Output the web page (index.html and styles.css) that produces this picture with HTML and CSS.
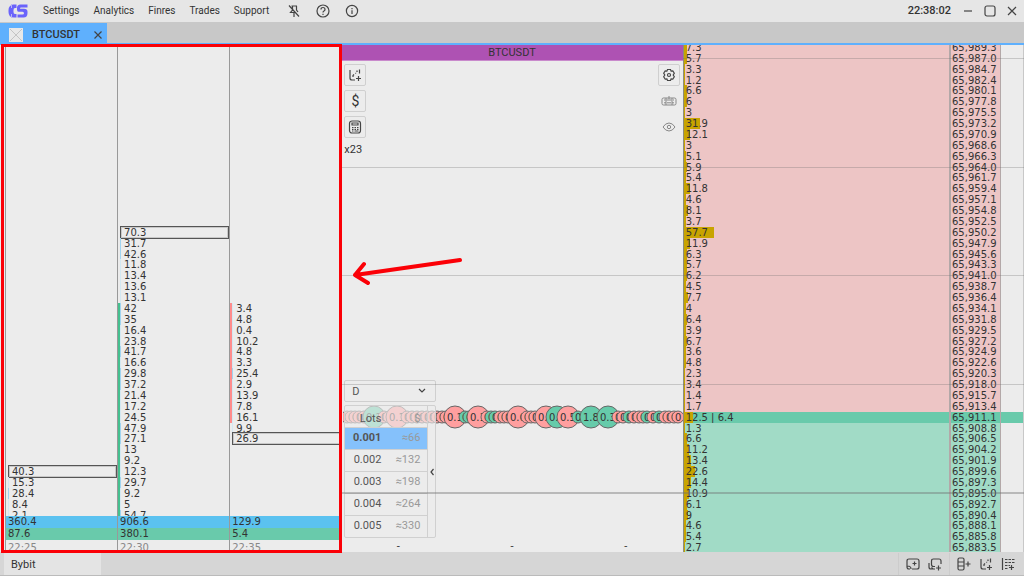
FILE: index.html
```html
<!DOCTYPE html>
<html lang="en">
<head>
<meta charset="utf-8">
<title>BTCUSDT</title>
<link rel="stylesheet" href="styles.css">
</head>
<body>
<div class="app">
  <header class="topbar">
    <svg class="logo" viewBox="0 0 20 16" width="20" height="16" aria-label="Logo">
      <path class="logo-fill" d="M5 1.500H8.500V5H7Q5.500 5 5.500 7v2q0 2 1.500 2h1.500v3.500H6Q0.500 14.500 0.500 9V7Q0.500 2.500 5 1.500zM12.500 1.500h7v3h-6.500q-1 0-1 1.200H16q3.500 0 3.500 3v1.300q0 4.500-4 4.500H9.500V11.500H14.500q1.500 0 1.500-1.300T14.500 8.700H10.500Q9 8.700 9 6.500V5q0-3.500 3.500-3.500z"/>
      <path class="logo-cut" d="M3.500 1v4M3.500 11v4"/>
    </svg>
    <nav class="menu">
      <button>Settings</button>
      <button>Analytics</button>
      <button>Finres</button>
      <button>Trades</button>
      <button>Support</button>
    </nav>
    <div class="top-icons">
      <button aria-label="Unpin">
        <svg class="icon" viewBox="0 0 14 14" width="14" height="14"><path d="M4.500 2h5.500M5.500 2v4L3.500 8.500h5M9.500 2v4l1.500 2M7 8.500V13M2 1.500l10 11"/></svg>
      </button>
      <button aria-label="Help">
        <svg class="icon" viewBox="0 0 14 14" width="14" height="14"><circle cx="7" cy="7" r="6"/><path d="M5 5.500Q5 3.500 7 3.500t2 2Q9 6.500 8 7T7 8.500M7 9.800v1.200"/></svg>
      </button>
      <button aria-label="Information">
        <svg class="icon" viewBox="0 0 14 14" width="14" height="14"><circle cx="7" cy="7" r="5.600"/><path d="M7 6.200V10M7 4v1.200"/></svg>
      </button>
    </div>
    <time class="clock">22:38:02</time>
    <div class="window-buttons">
      <button aria-label="Minimize"><svg class="icon" viewBox="0 0 12 12" width="12" height="12"><path d="M2 6h8"/></svg></button>
      <button aria-label="Maximize"><svg class="icon" viewBox="0 0 12 12" width="12" height="12"><rect x="1" y="1" width="10" height="10" rx="2"/></svg></button>
      <button aria-label="Close"><svg class="icon" viewBox="0 0 12 12" width="12" height="12"><path d="M2 2l8 8M10 2l-8 8"/></svg></button>
    </div>
  </header>

  <div class="tabs">
    <div class="tab">
      <svg class="tab-thumb" viewBox="0 0 14 14" width="14" height="14"><rect x="0" y="0" width="14" height="14"/><path d="M1 1l12 12M13 1L1 13"/></svg>
      <span class="tab-name">BTCUSDT</span>
      <button aria-label="Close tab"><svg class="icon" viewBox="0 0 10 10" width="10" height="10"><path d="M1.500 1.500l7 7M8.500 1.500l-7 7"/></svg></button>
    </div>
  </div>

  <main class="workspace">
    <section class="clusters" id="clusters" aria-label="Clusters"></section>

    <div class="market">
      <section class="chart">
        <div class="ladder ticks-layer"><div class="ticks" id="ticks"></div></div>
        <h1 class="chart-title">BTCUSDT</h1>
        <div class="chart-tools">
          <div class="tool-column">
            <button class="tool" aria-label="Add chart"><svg class="icon" viewBox="0 0 14 14" width="14" height="14"><path d="M2 2v8q0 2 2 2h3M5 9V7.500L6 6.500M7.500 5l.5.5M9 4V2.500M11.500 1.500v4M10.500 8v5M8 10.500h5"/></svg></button>
            <button class="tool tool-dollar" aria-label="Currency">$</button>
            <button class="tool" aria-label="Calculator"><svg class="icon" viewBox="0 0 14 14" width="14" height="14"><rect x="1.500" y="1" width="11" height="12" rx="2.500"/><path d="M4 3h6v2H4zM4 7.500h1.500M6.500 7.500H8M9 7.500h1.500M4 9.300h1.500M6.500 9.300H8M9 9.300h1.500M4 11h1.500M6.500 11h4"/></svg></button>
            <span class="multiplier">x23</span>
          </div>
          <div class="tool-column">
            <button class="tool" aria-label="Chart settings"><svg class="icon" viewBox="0 0 14 14" width="14" height="14"><path d="M5.500 1.500h3l.6 1.600 1.700-.3 1.500 2.500L11.200 7l1.100 1.700-1.500 2.500-1.700-.3-.6 1.600h-3l-.6-1.600-1.700.3-1.500-2.500L2.800 7 1.700 5.300l1.500-2.500 1.700.3z"/><circle cx="7" cy="7" r="1.500"/></svg></button>
            <button class="tool tool-plain" aria-label="Keyboard"><svg class="icon" viewBox="0 0 16 12" width="16" height="12"><rect x="1" y="3" width="14" height="7" rx="1.500"/><path d="M3 5h1.500M5.500 5H7M9 5h1.500M12 5h1M3 7.800h2M6 7.800h4M11 7.800h2M5 3v7M8 1v5M11 3v7"/></svg></button>
            <button class="tool tool-plain" aria-label="Visibility"><svg class="icon" viewBox="0 0 14 12" width="14" height="12"><path d="M1 6q2.500-4 6-4t6 4q-2.500 4-6 4T1 6z"/><circle cx="7" cy="6" r="1.700"/></svg></button>
          </div>
        </div>

        <div class="order-panel">
          <select class="account" aria-label="Account"><option>D</option></select>
          <div class="lots-box">
            <table class="lots">
              <thead><tr><th>Lots</th><th>$</th></tr></thead>
              <tbody>
                <tr class="selected"><td>0.001</td><td>≈66</td></tr>
                <tr><td>0.002</td><td>≈132</td></tr>
                <tr><td>0.003</td><td>≈198</td></tr>
                <tr><td>0.004</td><td>≈264</td></tr>
                <tr><td>0.005</td><td>≈330</td></tr>
              </tbody>
            </table>
            <button class="collapse" aria-label="Collapse"><svg class="icon" viewBox="0 0 6 10" width="6" height="10"><path d="M4.500 2L2 5l2.500 3"/></svg></button>
          </div>
        </div>
        <div class="dashes"><span>-</span><span>-</span><span>-</span></div>
      </section>

      <section class="book">
        <table class="book-table">
          <tbody class="ladder" id="book"></tbody>
        </table>
      </section>
      <div class="ladder levels" id="levels"></div>
    </div>

    <div class="frame"></div>
    <svg class="arrow" viewBox="0 0 114 30" width="114" height="30"><path d="M110 5L5 20M14 9L5 20l13 8"/></svg>
  </main>

  <footer class="statusbar">
    <button class="exchange">Bybit</button>
    <div class="status-group">
      <button aria-label="Add window"><svg class="icon" viewBox="0 0 14 14" width="14" height="14"><path d="M4 12H3Q1 12 1 10V4q0-2 2-2h8q2 0 2 2v6q0 2-2 2H6M1.500 9Q5 9 5 12M8.500 4.500v4M6.500 6.500h4"/></svg></button>
      <button aria-label="Add group"><svg class="icon" viewBox="0 0 14 14" width="14" height="14"><path d="M7 9.500H5.500Q3.500 9.500 3.500 7.500V4Q3.500 2 5.500 2H11q2 0 2 2v3M1 6v4q0 2 2 2h4M5 12l-1.500-1.500M10.500 8.500v5M8 11h5"/></svg></button>
    </div>
    <div class="status-group">
      <button aria-label="Add order book"><svg class="icon" viewBox="0 0 14 14" width="14" height="14"><rect x="1" y="1" width="6" height="12" rx="1.500"/><path d="M1 5h6M1 9h6M11 4.500v5M8.500 7h5"/></svg></button>
      <button aria-label="Add chart"><svg class="icon" viewBox="0 0 14 14" width="14" height="14"><path d="M2 2v8q0 2 2 2h3M5 9V7.500L6 6.500M7.500 5l.5.5M9 4V2.500M11.500 1.500v4M10.500 8v5M8 10.500h5"/></svg></button>
      <button aria-label="Add clusters"><svg class="icon" viewBox="0 0 14 14" width="14" height="14"><path d="M1.500 1v12M4 2.500h2.500M7.500 2.500H10M11 2.500h2.500M4 5.500h2.500M7.500 5.500H10M11 5.500h2.500M4 8.500h2.500M4 11.500h2.500M7.500 8.500H9M10.500 8v5M8 10.500h5"/></svg></button>
    </div>
  </footer>
</div>
<script src="app.js"></script>
</body>
</html>
```
FILE: styles.css
```css
* { box-sizing: border-box; }

body {
  margin: 0;
  font: 11px/16px Roboto, sans-serif;
  color: #333;
}

button {
  margin: 0;
  padding: 0;
  border: 0;
  background: none;
  font: inherit;
  color: inherit;
  display: flex;
  align-items: center;
  justify-content: center;
}

.icon {
  display: block;
  fill: none;
  stroke: #444;
  stroke-width: 1.2;
}

.app {
  height: 100vh;
  display: flex;
  flex-direction: column;
  overflow: hidden;
  background: #d6d6d6;
}

/* Top bar */
.topbar {
  height: 22px;
  flex: none;
  display: flex;
  align-items: center;
  padding: 0 6px 0 8px;
  background: #e6e6e6;
}
.logo { margin-right: 15px; }
.logo-fill { fill: #6a63fb; }
.logo-cut { stroke: #b9b6f3; stroke-width: 1; fill: none; }
.menu { display: flex; gap: 14px; font-size: 10px; }
.top-icons { display: flex; gap: 15px; margin-left: 18px; }
.clock { margin-left: auto; font-weight: 500; }
.window-buttons { display: flex; gap: 10px; margin-left: 11px; }

/* Tabs */
.tabs {
  height: 23px;
  flex: none;
  display: flex;
  align-items: flex-end;
  background: #c8c8c8;
  border-bottom: 2px solid #5fb0fd;
}
.tab {
  height: 20px;
  width: 107px;
  display: flex;
  align-items: center;
  padding: 3px 4px 0 9px;
  background: #5fb0fd;
}
.tab-name { margin-left: 9px; font-weight: 500; }
.tab button { margin-left: auto; }
.tab-thumb rect { fill: #e8e8e8; }
.tab-thumb path { stroke: #c4c4c4; }

/* Workspace */
.workspace {
  flex: 1;
  min-height: 0;
  position: relative;
  display: grid;
  grid-template-columns: minmax(0, 1fr) minmax(0, 2fr);
  background: #ececec;
}

.ladder {
  position: absolute;
  top: -3px;
  bottom: -1px;
  left: 0;
  right: 0;
  display: grid;
  grid-template-rows: repeat(47, minmax(0, 1fr));
  grid-template-columns: minmax(0, 1fr);
  font: 10px/11px "DejaVu Sans", sans-serif;
}

/* Clusters */
.clusters {
  display: grid;
  grid-template-columns: repeat(3, 1fr);
  padding-left: 5px;
}
.cluster {
  position: relative;
  overflow: hidden;
  display: flex;
  flex-direction: column;
  justify-content: flex-end;
  border-left: 1px solid #999;
  font: 10px/12px "DejaVu Sans", sans-serif;
}
.cluster-row {
  position: relative;
  margin-left: 2px;
  padding-left: 3px;
  border-left: 1px solid #d3e8f2;
}
.cluster-row.strong { border-left-color: #9fd4f1; }
.cluster-row.peak::after {
  content: "";
  position: absolute;
  inset: -1px 0 -1px -1px;
  border: 1px solid #555;
  outline: 1px solid rgba(90, 90, 90, 0.25);
  outline-offset: -2px;
}
.candle { width: 2px; grid-column: 1; }
.candle.up { background: #45c08f; }
.candle.down { background: #ff8c8c; }
.totals { position: relative; }
.totals div { height: 12px; padding-left: 2px; }
.totals .volume { background: #5bc2f0; }
.totals .delta { background: #69caab; }
.totals .time { background: #ececec; color: #888; line-height: 15px; }

/* Market */
.market {
  position: relative;
  display: flex;
  overflow: hidden;
}
.chart {
  flex: 1;
  min-width: 0;
  position: relative;
  display: flex;
  flex-direction: column;
}
.chart-title {
  margin: 0;
  z-index: 2;
  text-align: center;
  background: #ae52b3;
  border-bottom: 1px solid #c98acc;
  font-size: 11px;
  line-height: 15px;
  font-weight: 400;
}
.ticks { grid-row: 35; position: relative; }
.ticks svg {
  position: absolute;
  right: 0;
  top: 50%;
  margin-top: -12px;
}
.ticks circle { stroke: #666; stroke-width: 1; }
.ticks .sell { fill: #ff9f9f; }
.ticks .buy { fill: #66cbaa; }
.ticks text { fill: #333; font: 10px "DejaVu Sans", sans-serif; }

.chart-tools {
  display: flex;
  justify-content: space-between;
  padding: 3px;
}
.tool-column { display: flex; flex-direction: column; gap: 4px; }
.tool {
  width: 22px;
  height: 22px;
  border: 1px solid #cfcfcf;
  border-radius: 2px;
}
.tool-plain { border-color: transparent; }
.tool-plain .icon { stroke: #888; stroke-width: 1; }
.tool-dollar { font-size: 14px; }

.order-panel {
  width: 92px;
  margin: auto 0 0 3px;
  position: relative;
  display: flex;
  flex-direction: column;
  gap: 3px;
}
.account {
  height: 22px;
  appearance: none;
  padding: 0 7px;
  border: 1px solid #cfcfcf;
  border-radius: 2px;
  font: 11px Roboto, sans-serif;
  color: #555;
  background: #ececec url("data:image/svg+xml,%3Csvg xmlns='http://www.w3.org/2000/svg' width='8' height='6'%3E%3Cpath d='M1 1l3 3 3-3' fill='none' stroke='%23444' stroke-width='1.2'/%3E%3C/svg%3E") no-repeat right 9px center;
}
.lots-box {
  display: flex;
  border: 1px solid #d0d0d0;
  border-radius: 2px;
  background: rgba(236, 236, 236, 0.65);
}
.lots { flex: 1; border-collapse: collapse; color: #555; }
.lots th, .lots td {
  height: 22px;
  padding: 0;
  border-bottom: 1px solid #d0d0d0;
  text-align: right;
  font-weight: 400;
}
.lots th { height: 21px; vertical-align: bottom; }
.lots tr > :first-child { width: 36px; }
.lots tr > :last-child { padding-right: 7px; color: #999; }
.lots tr:last-child td { border-bottom: 0; }
.lots .selected { background: #85c1fb; }
.lots .selected td:first-child { font-weight: 700; }
.collapse { width: 8px; border-left: 1px solid #d0d0d0; }
.dashes {
  display: grid;
  grid-template-columns: repeat(3, 1fr);
  height: 14px;
  line-height: 18px;
  text-align: center;
}

.book {
  flex: 0 0 50%;
  position: relative;
  border-left: 1px solid #8d8d7c;
  border-right: 1px solid #c8c8c8;
}
.book-table { display: block; }
.book-table tr {
  display: grid;
  grid-template-columns: minmax(0, 1fr) 52px 22px;
}
.book-table td { padding: 0; display: block; }
.book-table .size { position: relative; background: #edc5c5; }
.book-table .size .bar { position: absolute; left: 0; top: 0; bottom: 0; background: #c8a400; }
.book-table .size .value { position: relative; margin-left: 2px; }
.book-table .price {
  padding-left: 1px;
  background: #edc5c5;
  border-left: 2px solid #b3a8a8;
  border-right: 1px solid #b3a8a8;
}
.book-table .bid .size, .book-table .bid .price { background: #a1dbc6; }
.book-table .last td, .book-table .last .size, .book-table .last .price { background: #69caab; }

.levels { pointer-events: none; }
.level {
  grid-column: 1;
  align-self: center;
  height: 1px;
  background: rgba(110, 110, 110, 0.3);
}
.level.major { height: 2px; background: rgba(110, 110, 110, 0.4); }

.frame {
  position: absolute;
  left: 1px;
  top: -1px;
  bottom: -1px;
  width: 33.3%;
  border: 3px solid #fb0007;
  z-index: 3;
}
.arrow {
  position: absolute;
  left: 34.2%;
  top: 41.5%;
  z-index: 3;
  fill: none;
  stroke: #fb0007;
  stroke-width: 4;
  stroke-linecap: round;
  stroke-linejoin: round;
}

/* Status bar */
.statusbar {
  height: 24px;
  flex: none;
  display: flex;
  align-items: stretch;
  padding: 1px 2px 0 4px;
  border-bottom: 1px solid #bbb;
}
.exchange {
  width: 97px;
  justify-content: flex-start;
  padding: 2px 0 0 7px;
  margin-right: auto;
  background: #e4e4e4;
}
.status-group {
  display: flex;
  gap: 8px;
  padding: 0 7px;
  border-left: 1px solid #ccc;
}
```
FILE: app.js
```js
const ROWS = 47;
const LAST = 34;

const sizes = [
  "7.3", "5.7", "3.3", "1.2", "6.6", "6", "3", "31.9", "12.1", "3", "5.1", "5.9",
  "5.4", "11.8", "4.6", "8.1", "3.7", "57.7", "11.9", "6.3", "5.7", "6.2", "4.5",
  "7.7", "4", "6.4", "3.9", "6.7", "3.6", "4.8", "2.3", "3.4", "1.4", "1.7",
  "12.5 | 6.4", "1.3", "6.6", "11.2", "13.4", "22.6", "14.4", "10.9", "6.1", "9",
  "4.6", "5.4", "2.7"
];

const clusters = [
  { start: 39, peak: 0, values: ["40.3", "15.3", "28.4", "8.4", "2.1"],
    volume: "360.4", delta: "87.6", time: "22:25" },
  { start: 17, peak: 0, candle: ["up", 24, 44],
    values: ["70.3", "31.7", "42.6", "11.8", "13.4", "13.6", "13.1", "42", "35",
      "16.4", "23.8", "41.7", "16.6", "29.8", "37.2", "21.4", "17.2", "24.5",
      "47.9", "27.1", "13", "9.2", "12.3", "29.7", "9.2", "5", "54.7"],
    volume: "906.6", delta: "380.1", time: "22:30" },
  { start: 24, peak: 12, candle: ["down", 24, 35],
    values: ["3.4", "4.8", "0.4", "10.2", "4.8", "3.3", "25.4", "2.9", "13.9",
      "7.8", "16.1", "9.9", "26.9"],
    volume: "129.9", delta: "5.4", time: "22:35" }
];

document.getElementById("clusters").innerHTML = clusters.map(c => {
  const rows = c.values.map((v, i) => {
    const cls = "cluster-row" + (i === c.peak ? " peak" : "") + (v > 25 ? " strong" : "");
    return `<div class="${cls}" style="grid-area:${c.start + i + 1}/1">${v}</div>`;
  }).join("");
  const candle = c.candle
    ? `<div class="candle ${c.candle[0]}" style="grid-row:${c.candle[1] + 1}/${c.candle[2] + 1}"></div>`
    : "";
  return `<div class="cluster"><div class="ladder">${candle}${rows}</div>
    <div class="totals"><div class="volume">${c.volume}</div><div class="delta">${c.delta}</div><div class="time">${c.time}</div></div></div>`;
}).join("");

document.getElementById("book").innerHTML = sizes.slice(0, ROWS).map((s, i) => {
  const price = (65989.3 - i * 2.3).toLocaleString("en-US", { minimumFractionDigits: 1, maximumFractionDigits: 1 });
  const total = s.split(" | ").reduce((sum, n) => sum + Number(n), 0);
  const cls = i === LAST ? "last" : i > LAST ? "bid" : "ask";
  return `<tr class="${cls}"><td class="size"><span class="bar" style="width:${(total * 0.195).toFixed(2)}%"></span><span class="value">${s}</span></td><td class="price">${price}</td><td></td></tr>`;
}).join("");

document.getElementById("levels").innerHTML = [1, 11, 21, 31, 41].map(row =>
  `<div class="level${row === 41 ? " major" : ""}" style="grid-row:${row + 1}"></div>`
).join("");

/* Trades: [x, side, label]; a label marks a large trade */
const trades = [
  [4, "s"], [8, "s"], [12, "s"], [16, "s"], [21, "s"], [31, "b", "0.2"], [41, "s"],
  [46, "s"], [54, "s", "0.10"], [64, "s"], [69, "s"], [74, "s"], [79, "s"], [84, "s"],
  [89, "s"], [94, "s"], [99, "s"], [103, "s"], [112, "s", "0.10"], [122, "b"],
  [126, "b"], [135, "s", "0.10"], [144, "s"], [148, "b"], [152, "b"], [157, "s"],
  [161, "s"], [165, "s"], [175, "s", "0.64"], [184, "s"], [188, "s"], [192, "s"],
  [203, "s", "0.2"], [214, "b", "0.3"], [225, "s", "0.54"], [235, "b"],
  [248, "b", "1.84"], [265, "b", "0.39"], [275, "s"], [280, "s"], [286, "b"],
  [291, "s"], [296, "s"], [300, "s"], [304, "b"], [310, "s"], [316, "b"],
  [322, "s"], [326, "s"], [331, "s"], [335, "s"]
];
document.getElementById("ticks").innerHTML =
  `<svg width="340" height="24" viewBox="0 0 340 24">` + trades.map(([x, side, label]) => {
    const r = label ? 11 : 6;
    return `<circle class="${side === "s" ? "sell" : "buy"}" cx="${x}" cy="12" r="${r}"/>` +
      `<text x="${label ? x - 8 : x - 3}" y="16">${label || "0"}</text>`;
  }).join("") + `</svg>`;
```
